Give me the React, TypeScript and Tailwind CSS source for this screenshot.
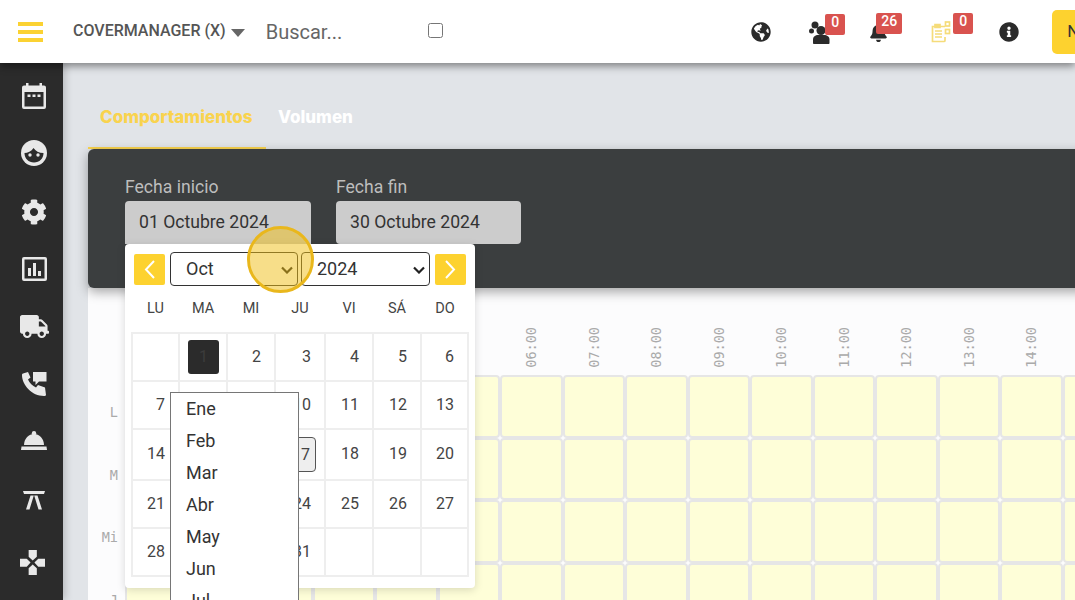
import { FaGlobeAmericas, FaBell, FaInfoCircle, FaCog, FaTruck } from "react-icons/fa";

const hours = Array.from({ length: 16 }, (_, i) => `${String(i).padStart(2, "0")}:00`);
const rows = ["L", "M", "Mi", "J"];
const weekdays = ["LU", "MA", "MI", "JU", "VI", "SÁ", "DO"];
const days: (number | null)[] = [null, 1, 2, 3, 4, 5, 6, 7, 8, 9, 10, 11, 12, 13, 14, 15, 16, 17, 18, 19, 20, 21, 22, 23, 24, 25, 26, 27, 28, 29, 30, 31, null, null, null];
const months = ["Ene", "Feb", "Mar", "Abr", "May", "Jun", "Jul"];

function CalendarIcon() {
  return (
    <svg width="26" height="27" viewBox="0 0 26 27" fill="#e8e8e8">
      <path fillRule="evenodd" d="M5 0h2.500v2.500h11V0H21v2.500h2a2 2 0 0 1 2 2V24a2 2 0 0 1-2 2H3a2 2 0 0 1-2-2V4.500a2 2 0 0 1 2-2h2zM3.500 9v14.500h19V9z" />
      <rect x="6.500" y="11.500" width="3" height="2.500" />
      <rect x="11.500" y="11.500" width="3" height="2.500" />
      <rect x="16.500" y="11.500" width="3" height="2.500" />
    </svg>
  );
}
function FaceIcon() {
  return (
    <svg width="26" height="26" viewBox="0 0 26 26">
      <circle cx="13" cy="13" r="13" fill="#e8e8e8" />
      <path d="M3.500 13c3 0 7-1.500 9-5 2 3 5.500 5 10 5 0 5.500-4 9.500-9.500 9.500S3.500 18.500 3.500 13z" fill="#2b2b2b" />
      <circle cx="9" cy="15" r="1.700" fill="#e8e8e8" />
      <circle cx="17" cy="15" r="1.700" fill="#e8e8e8" />
    </svg>
  );
}
function ChartIcon() {
  return (
    <svg width="25" height="24" viewBox="0 0 25 24" fill="#e8e8e8">
      <path fillRule="evenodd" d="M2 0h21a2 2 0 0 1 2 2v20a2 2 0 0 1-2 2H2a2 2 0 0 1-2-2V2a2 2 0 0 1 2-2zm.5 2.500v19h20v-19z" />
      <rect x="6" y="11" width="3" height="8" />
      <rect x="11" y="6" width="3" height="13" />
      <rect x="16" y="14" width="3" height="5" />
    </svg>
  );
}
function PhoneIcon() {
  return (
    <svg width="25" height="24" viewBox="0 0 25 24" fill="#e8e8e8">
      <path d="M1 1.500 6 0l2.500 5.500L6 7.500c1.500 3.500 4.500 6.500 8 8l2-2.500 7 2.500L24 23c-.2.800-1 1-2 1C10 24 0 13 0 3c0-.8.300-1.200 1-1.500z" />
      <path d="M11 0h13.500v9.500H17L13.500 13V9.500H11z" />
    </svg>
  );
}
function BellIcon() {
  return (
    <svg width="26" height="19" viewBox="0 0 26 19" fill="#e8e8e8">
      <circle cx="13" cy="2.200" r="2.200" />
      <path d="M3 14C3 7.500 8 3 13 3s10 4.500 10 11z" />
      <path d="M.5 15.500h25L26 19H0z" />
    </svg>
  );
}
function TableIcon() {
  return (
    <svg width="22" height="19" viewBox="0 0 22 19" fill="#e8e8e8">
      <path d="M0 0h22l-1 3H1z" />
      <path d="M7.500 4.500h3.300L6.500 18.500H3zM11.200 4.500h3.300L19 18.500h-3.500z" />
    </svg>
  );
}
function PadIcon() {
  return (
    <svg width="25" height="25" viewBox="0 0 26 26" fill="#e8e8e8">
      <path d="M9 0h8.500v7L13.200 11 9 7zM0 9h7l4 4-4 4.500H0zM26 9h-7l-4 4 4 4.500h7zM9 26h8.500v-7L13.200 15 9 19z" />
    </svg>
  );
}
function UsersIcon() {
  return (
    <svg width="21" height="23" viewBox="0 0 21 23" fill="#2b2b2b">
      <circle cx="6" cy="4" r="3.500" />
      <circle cx="2.500" cy="10" r="2.500" />
      <circle cx="12" cy="9.500" r="4.500" />
      <path d="M4 22v-3.500C4 15.500 6.500 14 9 14h6c3 0 5.500 1.500 5.500 4.500V22c0 .6-.5 1-1 1H5c-.5 0-1-.4-1-1z" />
    </svg>
  );
}
function ListIcon() {
  return (
    <svg width="20" height="22" viewBox="0 0 20 22" fill="none" stroke="#f5dc7a" strokeWidth="1.700">
      <path d="M14 5.500H1.500v15h11.500a1 1 0 0 0 1-1V16" />
      <path d="M4 3.500h5v3H4z" fill="#f5dc7a" />
      <path d="M4 10h7M4 13h7M4 16h7" />
      <rect x="14.500" y="1" width="4" height="4" />
      <rect x="14.500" y="8.500" width="4" height="4" />
    </svg>
  );
}
function Badge({ children, className }: { children: React.ReactNode; className: string }) {
  return (
    <span className={`absolute h-[21px] rounded-[2px] bg-[#d9534f] text-white text-[14px] leading-[17px] text-center font-medium ${className}`}>
      {children}
    </span>
  );
}
function Chevron({ flip }: { flip?: boolean }) {
  return (
    <svg width="11" height="19" viewBox="0 0 11 19" fill="none" stroke="#fff" strokeWidth="2" className={flip ? "rotate-180" : ""}>
      <path d="M10 1 2 9.500 10 18" />
    </svg>
  );
}
function Select({ value, className }: { value: string; className: string }) {
  return (
    <div className={`relative h-[34px] ${className}`}>
      <select defaultValue={value} className="appearance-none w-full h-full rounded-[4px] border border-[#333] pl-[15px] pb-[2px] text-[18px] text-[#333] bg-white">
        <option>{value}</option>
      </select>
      <svg width="12" height="8" viewBox="0 0 12 8" fill="none" stroke="#222" strokeWidth="2.200" className="absolute right-[5px] top-[14px]">
        <path d="M1 1.500 6 6.500 11 1.500" />
      </svg>
    </div>
  );
}

export default function App() {
  return (
    <div className="relative w-[1075px] h-[600px] overflow-hidden flex flex-col bg-white font-['Roboto',sans-serif]">
      <header className="relative z-20 h-[63px] shrink-0 flex items-center bg-white shadow-[0_3px_8px_rgba(0,0,0,0.45)] overflow-hidden">
        <div className="ml-[18px] w-[25px] shrink-0 flex flex-col gap-[4px]">
          <span className="h-[4px] bg-[#fbd232]" />
          <span className="h-[4px] bg-[#fbd232]" />
          <span className="h-[4px] bg-[#fbd232]" />
        </div>
        <span className="ml-[30px] mt-[-2px] shrink-0 text-[16px] font-medium text-[#555] whitespace-nowrap">COVERMANAGER (X)</span>
        <span className="ml-[5px] mt-[2px] shrink-0 w-0 h-0 border-x-[7px] border-x-transparent border-t-[8px] border-t-[#666]" />
        <span className="ml-[21px] shrink-0 text-[20px] text-[#666]">Buscar...</span>
        <input type="checkbox" className="ml-[86px] mt-[-3px] shrink-0 w-[15px] h-[15px]" />
        <div className="ml-[308px] shrink-0 flex items-center text-[#2b2b2b]">
          <FaGlobeAmericas size={20} />
          <div className="relative ml-[38px] mt-[1px]"><UsersIcon /><Badge className="left-[16px] w-[20px] top-[-7px]">0</Badge></div>
          <div className="relative ml-[39px] mt-[2px]"><FaBell size={19} /><Badge className="left-[7px] w-[26px] top-[-10px]">26</Badge></div>
          <div className="relative ml-[43px]"><ListIcon /><Badge className="left-[22px] w-[20px] top-[-8px]">0</Badge></div>
          <div className="ml-[48px]"><FaInfoCircle size={20} /></div>
        </div>
        <button className="ml-[33px] h-[44px] shrink-0 rounded-[5px] bg-[#fdd22f] pl-[15px] pr-4 text-[17px] text-[#333] text-left whitespace-nowrap">Nueva reserva</button>
      </header>

      <div className="flex flex-1 min-h-0">
        <aside className="relative z-10 w-[63px] shrink-0 bg-[#2b2b2b] flex flex-col items-center pt-[20px] shadow-[2px_0_8px_rgba(0,0,0,0.2)]">
          <div className="h-[58px] shrink-0 w-full flex justify-center ml-[5px]"><CalendarIcon /></div>
          <div className="h-[58px] shrink-0 w-full flex justify-center ml-[5px]"><div className="mt-[-1px]"><FaceIcon /></div></div>
          <div className="h-[58px] shrink-0 w-full flex justify-center ml-[5px]"><FaCog size={26} color="#e8e8e8" /></div>
          <div className="h-[58px] shrink-0 w-full flex justify-center ml-[5px]"><ChartIcon /></div>
          <div className="h-[58px] shrink-0 w-full flex justify-center ml-[5px]"><div className="mt-[-3px]"><FaTruck size={29} color="#e8e8e8" /></div></div>
          <div className="h-[58px] shrink-0 w-full flex justify-center ml-[5px]"><div className="mt-[-1px]"><PhoneIcon /></div></div>
          <div className="h-[58px] shrink-0 w-full flex justify-center ml-[5px]"><BellIcon /></div>
          <div className="h-[58px] shrink-0 w-full flex justify-center ml-[5px] pt-[2px]"><TableIcon /></div>
          <div className="h-[58px] shrink-0 w-full flex justify-center ml-[2px] pt-[3px]"><PadIcon /></div>
        </aside>

        <main className="flex-1 min-w-0 bg-[#e1e4e8] pl-[25px] overflow-hidden">
          <nav className="h-[86px] flex items-end">
            <div className="h-[86px] w-[178px] pl-[12px] pt-[42px] border-b-[2px] border-[#f9d34e] text-[17px] font-extrabold font-['Inter',sans-serif] text-[#f9d34e] whitespace-nowrap">Comportamientos</div>
            <div className="h-[86px] pl-[12px] pt-[42px] text-[17px] font-extrabold font-['Inter',sans-serif] text-white">Volumen</div>
          </nav>
          <section className="relative z-[1] w-[1100px] h-[139px] rounded-[6px] bg-[#3b3e3f] pl-[37px] pt-[25px] flex gap-[25px] shadow-[0_4px_12px_rgba(0,0,0,0.35)]">
            <div>
              <div className="text-[17.600px] leading-[27px] text-[#bdbdbd]">Fecha inicio</div>
              <div className="w-[186px] h-[43px] rounded-t-[4px] bg-[#cccccc] pl-[14px] text-[17.600px] leading-[42px] text-[#333]">01 Octubre 2024</div>
            </div>
            <div>
              <div className="text-[17.600px] leading-[27px] text-[#bdbdbd]">Fecha fin</div>
              <div className="w-[185px] h-[43px] rounded-[4px] bg-[#cccccc] pl-[14px] text-[17.600px] leading-[42px] text-[#333]">30 Octubre 2024</div>
            </div>
          </section>
          <section className="w-[1100px] h-[400px] bg-[#fcfcfd]">
            <div className="grid grid-cols-[37px_repeat(16,62.5px)] grid-rows-[87px_repeat(4,62.5px)] font-['DejaVu_Sans_Mono',monospace] text-[#aaa] text-[13.500px]">
              <div />
              {hours.map((h) => (
                <div key={h} className="flex items-end justify-center pb-[7px] pl-[1px]">
                  <span className="[writing-mode:vertical-rl] rotate-180 leading-none">{h}</span>
                </div>
              ))}
              {rows.map((r) => (
                <div key={r} className="contents">
                  <div className="pr-[7px] pt-[28px] text-right leading-[18px]">{r}</div>
                  {hours.map((h) => (
                    <div key={h} className="rounded-[4px] border-2 border-[#e6e6e6] bg-[#fefed8]" />
                  ))}
                </div>
              ))}
            </div>
          </section>
        </main>
      </div>

      {/* date picker popup */}
      <div className="absolute z-30 left-[125px] top-[244px] w-[350px] h-[344px] rounded-[4px] bg-white shadow-[0_2px_8px_rgba(0,0,0,0.15)] text-[#444]">
        <div className="flex items-center h-[50px] pl-[9px]">
          <button className="w-[31px] h-[31px] rounded-[2px] bg-[#fdd22f] flex items-center justify-center"><Chevron /></button>
          <Select value="Oct" className="ml-[5px] w-[128px]" />
          <Select value="2024" className="ml-[3px] w-[129px]" />
          <button className="ml-[5px] w-[31px] h-[31px] rounded-[2px] bg-[#fdd22f] flex items-center justify-center"><Chevron flip /></button>
        </div>
        <div className="ml-[7px] grid grid-cols-[47px_48px_48px_50px_48px_48px_48px] h-[38px] pt-[5px] text-[14.500px] text-center">
          {weekdays.map((d) => (
            <span key={d} className="leading-[20px]">{d}</span>
          ))}
        </div>
        <div className="ml-[6px] w-[338px] border-l-2 border-t-2 border-[#eeeeee] grid grid-cols-[47px_48px_48px_50px_48px_48px_47px] grid-rows-[48px_48px_51px_48px_48px]">
          {days.map((d, i) => (
            <div key={i} className="relative border-r-2 border-b-2 border-[#eeeeee] flex items-center justify-end pr-[13px] pb-[1px] text-[16px] text-[#444]">
              {d === 1 ? (
                <span className="absolute left-[8px] top-[6px] w-[31px] h-[34px] rounded-[3px] bg-[#2b2b2b] text-center leading-[34px] text-[#3c3c3c]">1</span>
              ) : d === 17 ? (
                <span className="absolute left-[8px] top-[7px] w-[32px] h-[35px] rounded-[4px] border border-[#555] bg-[#eeeeee] text-right pr-[5px] leading-[33px]">17</span>
              ) : (
                d
              )}
            </div>
          ))}
        </div>
      </div>

      {/* open month list */}
      <div className="absolute z-40 left-[170px] top-[392px] w-[129px] h-[220px] border border-[#767676] bg-white">
        {months.map((m) => (
          <div key={m} className="h-[32px] pl-[15px] text-[18px] leading-[31px] text-[#333]">{m}</div>
        ))}
      </div>

      {/* pointer highlight */}
      <div className="absolute z-50 left-[247px] top-[226px] w-[67px] h-[67px] rounded-full border-[3px] border-[#e9b71c] bg-[rgba(240,190,20,0.5)]" />
    </div>
  );
}
